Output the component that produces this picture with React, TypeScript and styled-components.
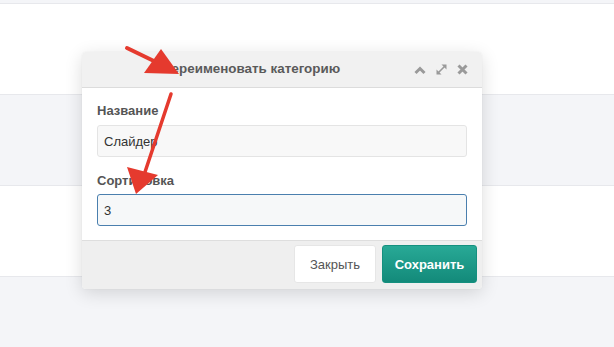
import React from "react";
import styled, { createGlobalStyle } from "styled-components";

const Global = createGlobalStyle`
  html, body { margin: 0; padding: 0; background: #f4f5f8; }
  body { font-family: "Liberation Sans", Arial, sans-serif; }
  * { box-sizing: border-box; }
`;

const Page = styled.div`
  position: relative;
  width: 614px;
  height: 347px;
  overflow: hidden;
  background: #f4f5f8;
`;

const TopStrip = styled.div`
  height: 3px;
  background: #f4f5f8;
`;

const Row = styled.div<{ $alt?: boolean }>`
  height: 91px;
  border-top: 1px solid #e7e8ec;
  background: ${(p) => (p.$alt ? "#f4f5f8" : "#ffffff")};
`;

const Dialog = styled.div`
  position: absolute;
  left: 82px;
  top: 52px;
  width: 400px;
  background: #fff;
  border-radius: 4px;
  box-shadow: 0 4px 18px rgba(0, 0, 0, 0.14), 0 0 2px rgba(0, 0, 0, 0.06);
  overflow: hidden;
`;

const Header = styled.div`
  height: 36px;
  display: flex;
  align-items: center;
  background: #f1f1f1;
  border-bottom: 1px solid #dcdcdc;
  padding: 0 14px 0 80px;
`;

const Title = styled.div`
  flex: 1;
  font-size: 13.4px;
  font-weight: bold;
  color: #5a5a5a;
  margin-top: -2px;
`;

const Tools = styled.div`
  display: flex;
  align-items: center;
  gap: 9px;
  color: #9a9a9a;
`;

const Body = styled.div`
  padding: 15px 15px 14px;
  display: flex;
  flex-direction: column;
`;

const Label = styled.div<{ $gap: number }>`
  font-size: 13px;
  font-weight: bold;
  color: #555;
  line-height: 16px;
  margin-bottom: ${(p) => p.$gap}px;
`;

const Input = styled.div<{ $focus?: boolean }>`
  height: 32px;
  display: flex;
  align-items: center;
  padding: 0 6px;
  font-size: 13px;
  color: #333;
  border-radius: 3px;
  background: ${(p) => (p.$focus ? "#f6f8f9" : "#f8f8f8")};
  border: 1px solid ${(p) => (p.$focus ? "#4a7fae" : "#e4e4e4")};
  margin-bottom: ${(p) => (p.$focus ? 0 : 16)}px;
`;

const Footer = styled.div`
  height: 49px;
  background: #efefef;
  border-top: 1px solid #dedede;
  display: flex;
  justify-content: flex-end;
  align-items: center;
  gap: 6px;
  padding: 0 5px 2px;
`;

const Button = styled.div<{ $primary?: boolean }>`
  height: 38px;
  width: ${(p) => (p.$primary ? 95 : 82)}px;
  display: flex;
  align-items: center;
  justify-content: center;
  font-size: 13px;
  border-radius: 3px;
  font-weight: ${(p) => (p.$primary ? "bold" : "normal")};
  color: ${(p) => (p.$primary ? "#fff" : "#555")};
  background: ${(p) =>
    p.$primary ? "linear-gradient(#28a996, #138a7a)" : "#fff"};
  border: 1px solid ${(p) => (p.$primary ? "#15907f" : "#e6e6e6")};
`;

const Arrows = styled.svg`
  position: absolute;
  left: 0;
  top: 0;
  pointer-events: none;
`;

export default function App() {
  return (
    <Page>
      <Global />
      <TopStrip />
      <Row />
      <Row $alt />
      <Row />
      <Row $alt />
      <Dialog>
        <Header>
          <Title>Переименовать категорию</Title>
          <Tools>
            <svg width="12" height="12" viewBox="0 0 12 12">
              <polyline points="1.5,9 6,4.5 10.5,9" fill="none" stroke="currentColor" strokeWidth="3" />
            </svg>
            <svg width="13" height="13" viewBox="0 0 13 13">
              <line x1="3" y1="10" x2="10" y2="3" stroke="currentColor" strokeWidth="1.6" />
              <polygon points="6.5,1.5 11.5,1.5 11.5,6.5" fill="currentColor" />
              <polygon points="1.5,6.5 1.5,11.5 6.5,11.5" fill="currentColor" />
            </svg>
            <svg width="11" height="11" viewBox="0 0 11 11">
              <path d="M1.5 1.5 L9.5 9.5 M9.5 1.5 L1.5 9.5" stroke="currentColor" strokeWidth="3" />
            </svg>
          </Tools>
        </Header>
        <Body>
          <Label $gap={6}>Название</Label>
          <Input>Слайдер</Input>
          <Label $gap={5}>Сортировка</Label>
          <Input $focus>3</Input>
        </Body>
        <Footer>
          <Button>Закрыть</Button>
          <Button $primary>Сохранить</Button>
        </Footer>
      </Dialog>
      <Arrows width="614" height="347" viewBox="0 0 614 347">
        <line x1="127" y1="48" x2="158" y2="63" stroke="#e53a2e" strokeWidth="4" strokeLinecap="round" />
        <polygon points="161,49 144,73 179,74" fill="#e53a2e" />
        <line x1="171" y1="94" x2="145" y2="172" stroke="#e53a2e" strokeWidth="3.5" strokeLinecap="round" />
        <polygon points="127,167 158,175 136,194" fill="#e53a2e" />
      </Arrows>
    </Page>
  );
}
